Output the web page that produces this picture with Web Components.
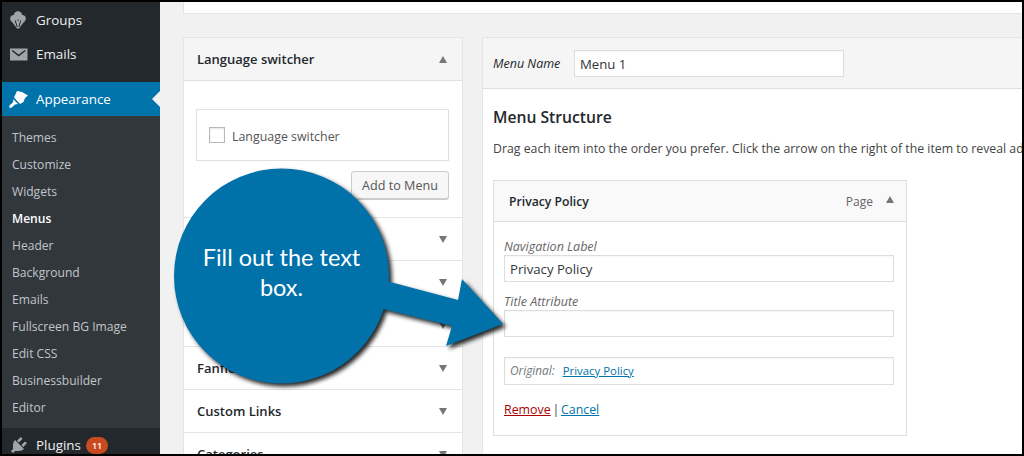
<!DOCTYPE html>
<html>
<head>
<meta charset="utf-8">
<style>
html, body { margin: 0; padding: 0; height: 100%; }
body { font-family: "Open Sans", sans-serif; color: #444; background: #f1f1f1; }
</style>
</head>
<body>
<wp-screen>
  <wp-sidebar slot="side">
    <side-item icon="groups">Groups</side-item>
    <side-item icon="mail">Emails</side-item>
    <side-item icon="brush" current style="margin-top:11px">Appearance</side-item>
    <side-sub>
      <a>Themes</a><a>Customize</a><a>Widgets</a><a class="on">Menus</a><a>Header</a><a>Background</a><a>Emails</a><a>Fullscreen BG Image</a><a>Edit CSS</a><a>Businessbuilder</a><a>Editor</a>
    </side-sub>
    <side-item icon="plug" badge="11">Plugins</side-item>
  </wp-sidebar>
  <menu-accordion slot="left"></menu-accordion>
  <menu-editor slot="right"></menu-editor>
  <call-out slot="over">Fill out the text box.</call-out>
</wp-screen>

<script>
const ICONS = {
  groups: '<circle cx="9" cy="5.500" r="4.200"/><circle cx="4.800" cy="8.500" r="3.600"/><circle cx="13.200" cy="8.500" r="3.600"/><path d="M2 10.500L8 18.500h2l6-8z"/><path d="M6.200 10.500l2 6.500M11.800 10.500l-2 6.500" stroke="#23282d" stroke-width="1" fill="none"/>',
  mail: '<path d="M1 4.500h17.500v12H1z"/><path d="M3.200 6.500l6.500 5 6.500-5" stroke="#23282d" stroke-width="1.500" fill="none"/>',
  brush: '<path d="M8 2l5 1 6 3.500-3 2.500-1.500 4-3.500 2-6-6.500z"/><path d="M4.300 10.300l4.700 4.600-3 .6-3 2.700c-1.200 1-2.500.9-2.700-.3-.2-.9.4-1.600 1.300-2.300l2.400-2.300z"/>',
  plug: '<path d="M13.110 4.360L9.870 7.600 8 5.730l3.240-3.240c.35-.34 1.050-.2 1.560.32.52.51.66 1.210.31 1.550zm-8 1.770l.91-1.120 9.010 9.010-1.190.84c-.71.71-2.630 1.160-3.820 1.160H6.140L4.900 17.260c-.59.59-1.540.59-2.120 0-.59-.58-.59-1.530 0-2.120l1.240-1.240v-3.880c0-1.130.4-3.190 1.090-3.890zm7.260 3.970l3.240-3.240c.34-.35 1.040-.21 1.550.31.52.51.66 1.210.31 1.550l-3.240 3.250z"/>'
};

class WpScreen extends HTMLElement {
  constructor() {
    super();
    this.attachShadow({ mode: "open" }).innerHTML = `
    <style>
    :host { display: block; position: relative; box-sizing: border-box; width: 1024px; height: 456px; border: 2px solid #000; overflow: hidden; background: #f1f1f1; }
    .row { display: flex; height: 100%; }
    .side { flex: 0 0 158px; }
    .main { flex: 1; min-width: 0; padding-left: 23px; }
    .top { height: 11px; background: #fff; border: 1px solid #e5e5e5; border-top: 0; border-right: 0; margin-bottom: 23px; }
    .cols { display: flex; gap: 19px; align-items: flex-start; }
    </style>
    <div class="row">
      <div class="side"><slot name="side"></slot></div>
      <div class="main">
        <div class="top"></div>
        <div class="cols"><slot name="left"></slot><slot name="right"></slot></div>
      </div>
    </div>
    <slot name="over"></slot>`;
  }
}

class WpSidebar extends HTMLElement {
  constructor() {
    super();
    this.attachShadow({ mode: "open" }).innerHTML = `
    <style>
    :host { display: block; height: 100%; background: #23282d; padding-top: 1px; box-sizing: border-box; overflow: hidden; }
    </style><slot></slot>`;
  }
}

class SideItem extends HTMLElement {
  constructor() {
    super();
    const cur = this.hasAttribute("current");
    const badge = this.getAttribute("badge");
    this.attachShadow({ mode: "open" }).innerHTML = `
    <style>
    :host { display: flex; align-items: center; height: 34px; position: relative; color: #eee; font-size: 13.400px; background: ${cur ? "#0073aa" : "transparent"}; ${cur ? "color:#fff;" : ""} }
    svg { width: 20px; height: 20px; margin: 0 7px 0 7px; fill: ${cur ? "#fff" : "#a0a5aa"}; flex: none; }
    .label { padding-bottom: 1px; }
    .badge { margin-left: 5px; background: #ca4a1f; color: #fff; border-radius: 9px; font-size: 9px; font-weight: 600; height: 17px; line-height: 17px; padding: 0 6px; }
    .tip { position: absolute; right: 0; top: 9px; border: 8px solid transparent; border-right-color: #f1f1f1; border-left: 0; }
    </style>
    <svg viewBox="0 0 20 20">${ICONS[this.getAttribute("icon")]}</svg>
    <span class="label"><slot></slot></span>
    ${badge ? `<span class="badge">${badge}</span>` : ""}
    ${cur ? '<span class="tip"></span>' : ""}`;
  }
}

class SideSub extends HTMLElement {
  constructor() {
    super();
    this.attachShadow({ mode: "open" }).innerHTML = `
    <style>
    :host { display: block; background: #32373c; padding: 8px 0 7px; }
    ::slotted(a) { display: block; height: 27px; line-height: 27px; padding-left: 10px; font-size: 12.100px; color: rgba(240,245,250,.75); white-space: nowrap; }
    ::slotted(a.on) { color: #fff; font-weight: 600; }
    </style><slot></slot>`;
  }
}

class MetaRow extends HTMLElement {
  constructor() {
    super();
    this.attachShadow({ mode: "open" }).innerHTML = `
    <style>
    :host { display: flex; align-items: center; justify-content: space-between; height: 42px; padding: 0 15px 0 13px; border-bottom: 1px solid #e5e5e5; font-size: 13px; font-weight: 600; color: #23282d; background: #fff; }
    :host([open]) { background: #f5f5f5; border-bottom-color: #e1e1e1; }
    i { border: 4.500px solid transparent; border-top: 7px solid #72777c; border-bottom: 0; }
    :host([open]) i { border-top: 0; border-bottom: 7px solid #72777c; }
    </style><span><slot></slot></span><i></i>`;
  }
}
class MenuAccordion extends HTMLElement {
  constructor() {
    super();
    this.attachShadow({ mode: "open" }).innerHTML = `
    <style>
    :host { display: block; flex: 0 0 278px; width: 278px; background: #fff; border: 1px solid #e5e5e5; }
    .body { height: 137px; box-sizing: border-box; padding: 28px 13px 0 12px; border-bottom: 1px solid #e5e5e5; display: flex; flex-direction: column; align-items: flex-end; gap: 10px; }
    .box { align-self: stretch; height: 52px; box-sizing: border-box; border: 1px solid #dfdfdf; padding: 0 12px; display: flex; align-items: center; gap: 7px; font-size: 12.400px; color: #555; }
    .box b { font-weight: 400; padding-top: 2px; }
    .check { width: 16px; height: 16px; box-sizing: border-box; border: 1px solid #b4b9be; background: #fff; box-shadow: inset 0 1px 2px rgba(0,0,0,.1); }
    .btn { box-sizing: border-box; width: 98px; height: 28px; line-height: 28px; text-align: center; border: 1px solid #ccc; border-radius: 3px; background: #f7f7f7; box-shadow: 0 1px 0 #ccc; font-size: 12.600px; color: #555; }
    </style>
    <meta-row open>Language switcher</meta-row>
    <div class="body">
      <div class="box"><span class="check"></span><b>Language switcher</b></div>
      <div class="btn">Add to Menu</div>
    </div>
    <meta-row></meta-row>
    <meta-row></meta-row>
    <meta-row></meta-row>
    <meta-row>Fanfiction</meta-row>
    <meta-row>Custom Links</meta-row>
    <meta-row>Categories</meta-row>`;
  }
}

class TextField extends HTMLElement {
  constructor() {
    super();
    this.attachShadow({ mode: "open" }).innerHTML = `
    <style>
    :host { display: flex; align-items: center; box-sizing: border-box; height: 27px; border: 1px solid #ddd; background: #fff; padding: 0 5px; font-size: 13.200px; color: #32373c; white-space: nowrap; box-shadow: inset 0 1px 2px rgba(0,0,0,.04); }
    </style><slot></slot>`;
  }
}

class MenuEditor extends HTMLElement {
  constructor() {
    super();
    this.attachShadow({ mode: "open" }).innerHTML = `
    <style>
    :host { display: block; flex: 1; min-width: 0; height: 430px; background: #fff; border: 1px solid #e5e5e5; border-right: 0; overflow: hidden; }
    .head { height: 51px; box-sizing: border-box; background: #f5f5f5; border-bottom: 1px solid #dfdfdf; display: flex; align-items: flex-start; padding: 12px 0 0 10px; gap: 14px; }
    .head em { font-size: 12.500px; line-height: 27px; color: #23282d; width: 67px; white-space: nowrap; }
    .head text-field { width: 270px; }
    .body { padding: 0 10px; }
    h3 { margin: 16px 0 0; font-size: 15.700px; line-height: 24px; font-weight: 600; color: #23282d; }
    p { margin: 10px 0 0; font-size: 12.300px; line-height: 20px; color: #444; white-space: nowrap; }
    .item { width: 414px; box-sizing: border-box; margin-top: 21px; border: 1px solid #dfdfdf; }
    .ihead { height: 40px; background: #f9f9f9; border-bottom: 1px solid #dfdfdf; display: flex; align-items: center; padding: 0 12px 0 15px; font-size: 12.200px; font-weight: 600; color: #23282d; }
    .ihead span { margin-left: auto; margin-right: 13px; font-weight: 400; font-size: 12px; color: #666; }
    .ihead i { border: 4.500px solid transparent; border-top: 0; border-bottom: 7px solid #72777c; margin-top: -3px; }
    .form { padding: 16px 12px 0 10px; height: 213px; box-sizing: border-box; }
    label { display: block; font-style: italic; font-size: 12.500px; line-height: 17px; color: #666; }
    .gap { margin-top: 11px; }
    .orig { margin-top: 20px; height: 28px; padding-bottom: 2px; font-size: 11.400px; }
    .orig em { color: #72777c; font-size: 11.800px; margin-right: 8px; }
    a { color: #0073aa; text-decoration: underline; }
    .links { margin-top: 15px; font-size: 12.400px; line-height: 20px; color: #444; }
    .links a.del { color: #a00; }
    .sep { margin: 0 -1.500px; }
    </style>
    <div class="head"><em>Menu Name</em><text-field>Menu 1</text-field></div>
    <div class="body">
      <h3>Menu Structure</h3>
      <p>Drag each item into the order you prefer. Click the arrow on the right of the item to reveal additional configuration options.</p>
      <div class="item">
        <div class="ihead">Privacy Policy<span>Page</span><i></i></div>
        <div class="form">
          <label>Navigation Label</label>
          <text-field>Privacy Policy</text-field>
          <label class="gap">Title Attribute</label>
          <text-field></text-field>
          <text-field class="orig"><em>Original:</em><a>Privacy Policy</a></text-field>
          <div class="links"><a class="del">Remove</a><span class="sep"> | </span><a>Cancel</a></div>
        </div>
      </div>
    </div>`;
  }
}

class CallOut extends HTMLElement {
  constructor() {
    super();
    this.attachShadow({ mode: "open" }).innerHTML = `
    <style>
    :host { display: block; position: absolute; left: 168px; top: 162px; width: 345px; height: 230px; }
    svg { position: absolute; inset: 0; width: 100%; height: 100%; overflow: visible; filter: drop-shadow(3px 3px 2px rgba(0,0,0,.85)); }
    .t { position: absolute; left: 4px; top: 6px; width: 215px; height: 215px; box-sizing: border-box; padding: 0 15px 12px; display: flex; align-items: center; justify-content: center; text-align: center; color: #fff; font-family: "Lato", sans-serif; font-size: 23.500px; line-height: 30px; }
    </style>
    <svg viewBox="0 0 345 230"><g fill="#0071a9" transform="translate(0 4)"><circle cx="111.500" cy="108" r="107.500"/><path d="M205 110L288 132L292 111L333 156L276 178L282 158L205 139Z"/></g></svg>
    <div class="t"><slot></slot></div>`;
  }
}

customElements.define("wp-screen", WpScreen);
customElements.define("wp-sidebar", WpSidebar);
customElements.define("side-item", SideItem);
customElements.define("side-sub", SideSub);
customElements.define("meta-row", MetaRow);
customElements.define("menu-accordion", MenuAccordion);
customElements.define("text-field", TextField);
customElements.define("menu-editor", MenuEditor);
customElements.define("call-out", CallOut);
</script>
</body>
</html>
